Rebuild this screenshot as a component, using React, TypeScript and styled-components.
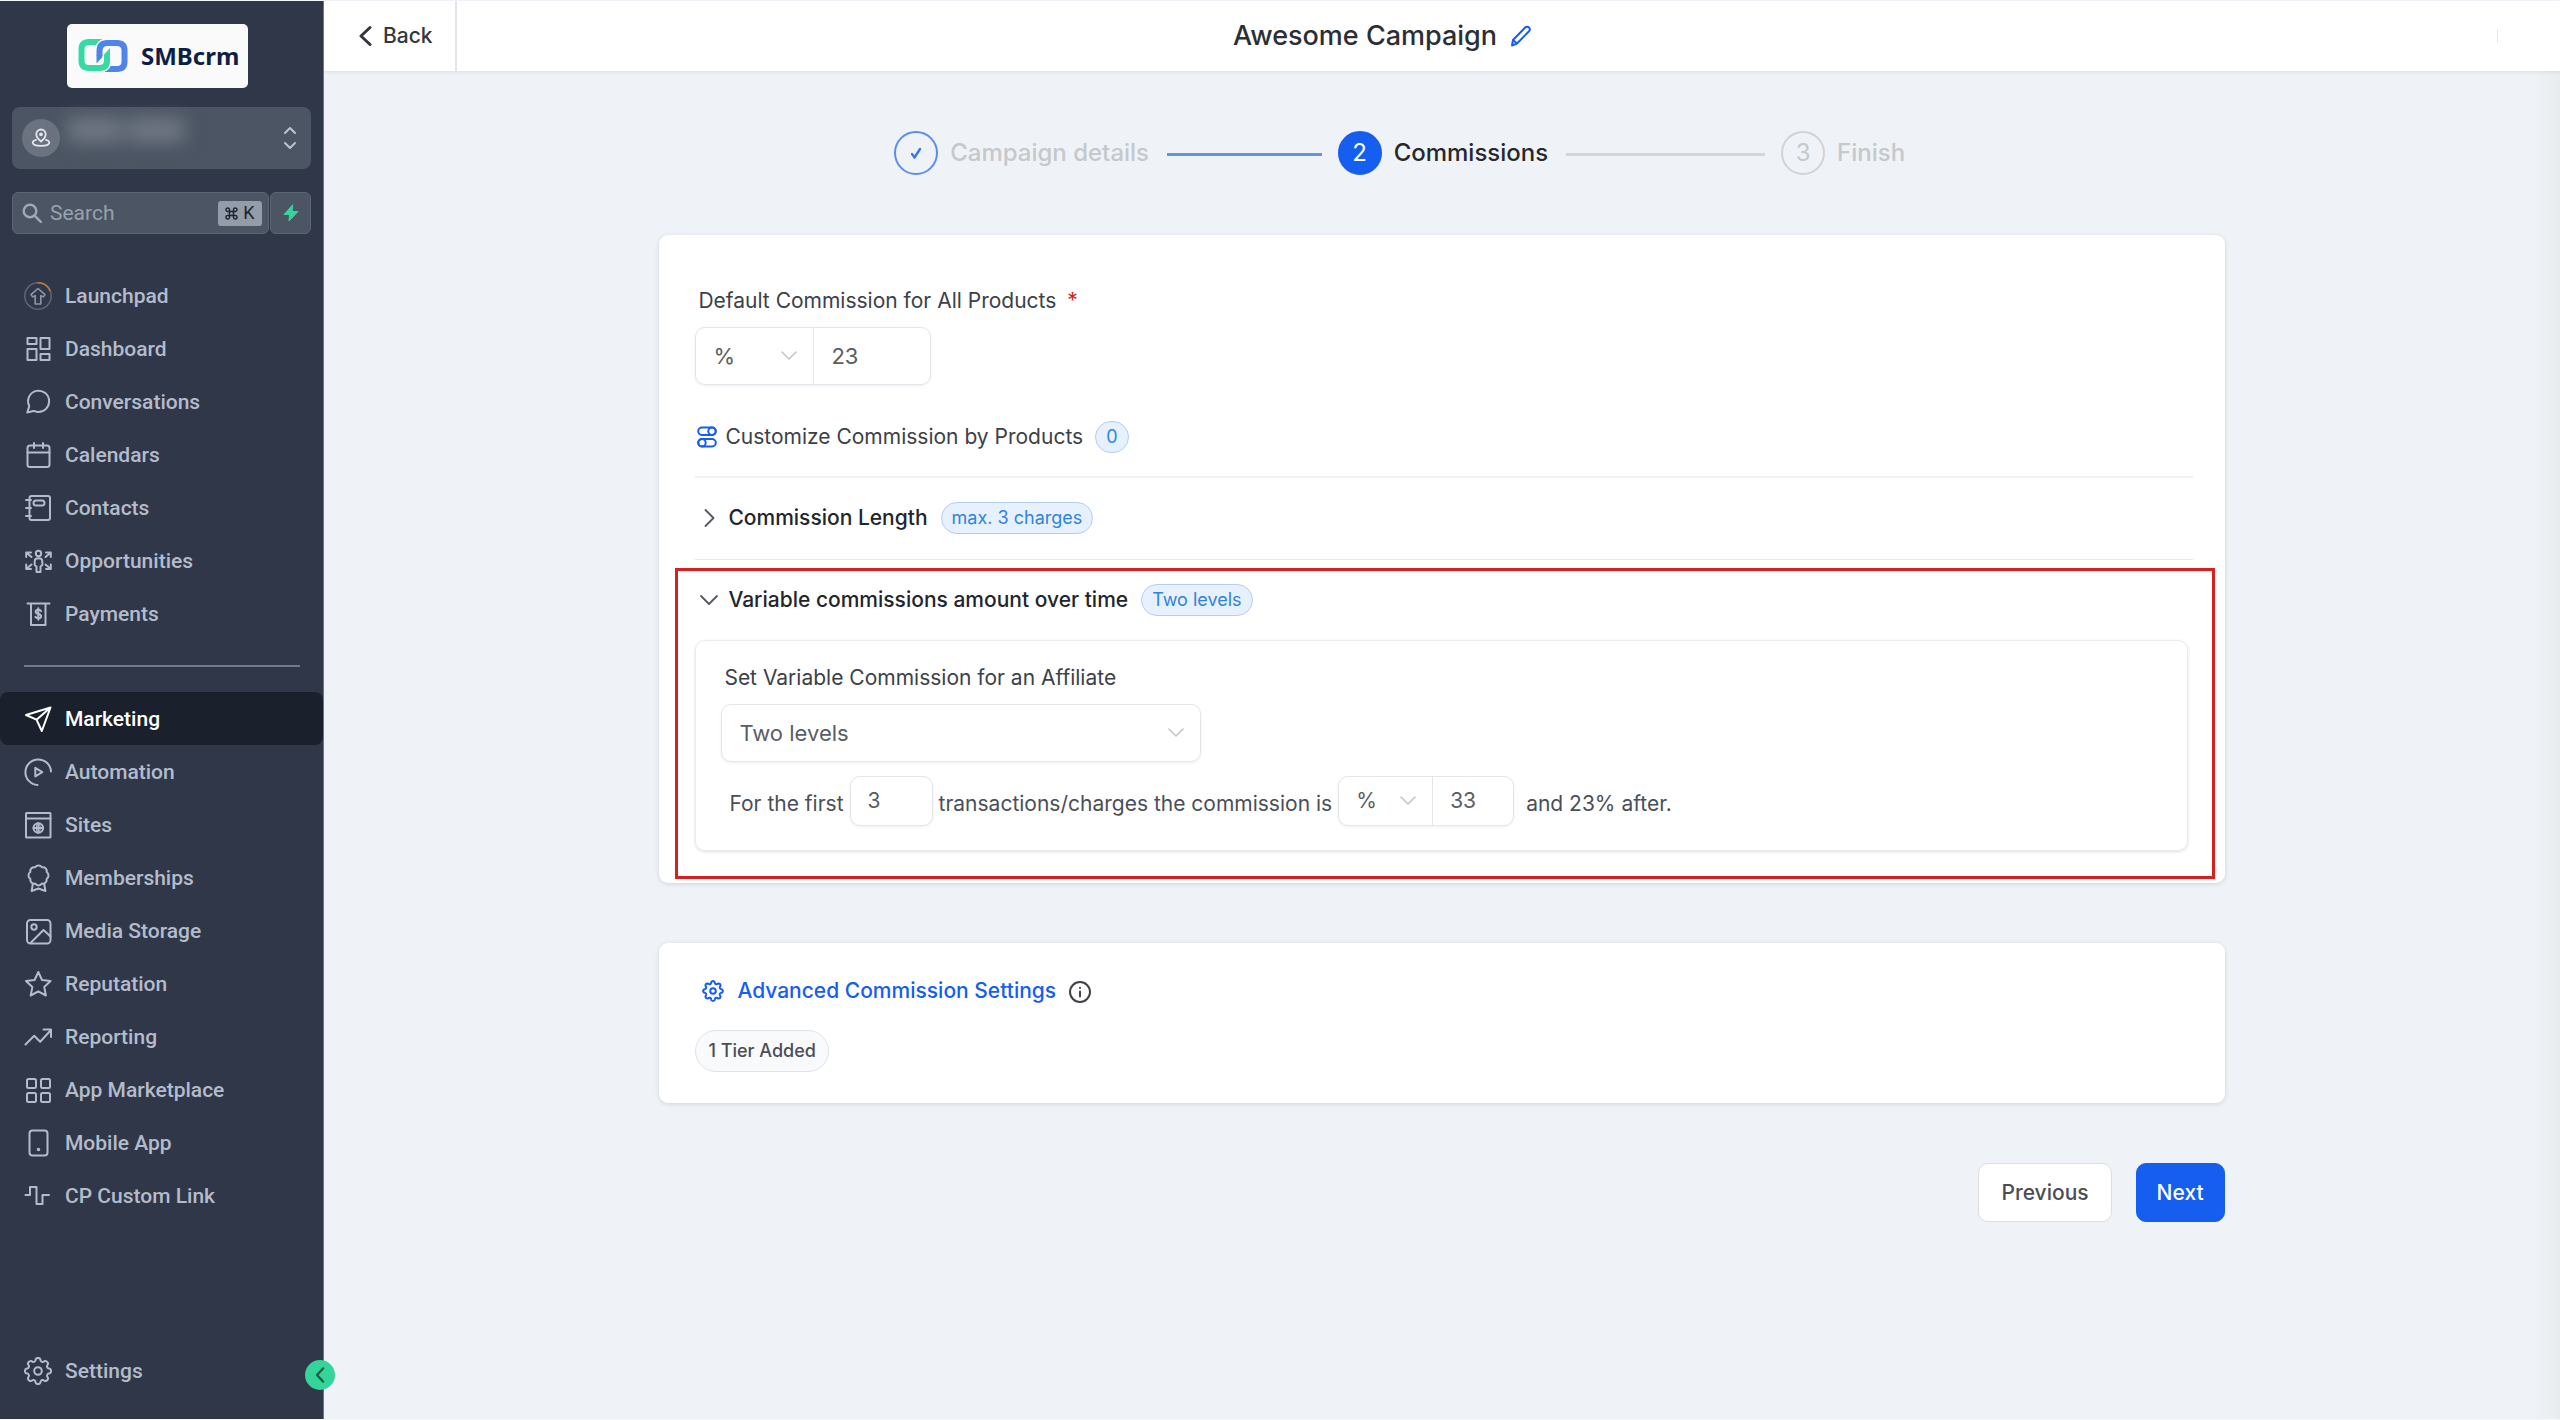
import React from 'react';
import styled, { createGlobalStyle, css } from 'styled-components';

const ui = '"Inter", "Liberation Sans", sans-serif';
const side = '"Roboto", "Liberation Sans", sans-serif';

const c = {
  sidebar: '#2f3749',
  sidebarText: '#b4bccb',
  panel: '#4b5563',
  active: '#1a202c',
  canvas: '#eff3f7',
  ink: '#22262c',
  body: '#3c4148',
  muted: '#5a5d63',
  line: '#e4e6e9',
  blue: '#155eef',
  softBlue: '#5b8def',
  green: '#35d49a',
  red: '#d92020',
};

const GlobalStyle = createGlobalStyle`
  *, *::before, *::after { box-sizing: border-box; }
  body { margin: 0; background: #f3f7fc; }
  button, input, select { font: inherit; color: inherit; margin: 0; }
  ul, ol { list-style: none; margin: 0; padding: 0; }
  svg { display: block; flex: none; }
`;

/* ---------- shell ---------- */

const Page = styled.div`
  display: flex;
  min-height: 100vh;
  padding: 1px 0;
  font-family: ${ui};
  color: ${c.body};
`;

const Sidebar = styled.aside`
  position: relative;
  flex: none;
  display: flex;
  flex-direction: column;
  width: 324px;
  padding: 23px 0 22px;
  background: ${c.sidebar};
  border-right: 1px solid #6d7686;
  font-family: ${side};
  color: ${c.sidebarText};
`;

const Logo = styled.a`
  display: flex;
  align-items: center;
  align-self: flex-start;
  gap: 13px;
  width: 181px;
  height: 64px;
  margin-left: 67px;
  padding-left: 11px;
  border-radius: 5px;
  background: #fafafa;
  color: #0d1f47;
  font-family: "Noto Sans", "Open Sans", sans-serif;
  font-size: 24px;
  font-weight: 700;
  line-height: 32px;
  text-decoration: none;
`;

const Account = styled.button`
  display: flex;
  align-items: center;
  gap: 4px;
  height: 62px;
  margin: 19px 12px 0;
  padding: 0 14px 0 10px;
  border: 0;
  border-radius: 8px;
  background: ${c.panel};
  color: #bcc3ce;
`;

const Avatar = styled.span`
  display: grid;
  place-items: center;
  width: 38px;
  height: 38px;
  border-radius: 50%;
  background: #6b7280;
  color: #e3e7ec;
`;

const HiddenName = styled.span`
  flex: 1;
  display: flex;
  align-self: flex-start;
  gap: 6px;
  padding: 11px 0 0 4px;
  filter: blur(9px);
  &::before, &::after {
    content: "";
    height: 24px;
    background: #717885;
  }
  &::before { width: 54px; }
  &::after { width: 56px; }
`;

const SearchRow = styled.div`
  display: flex;
  gap: 1px;
  margin: 23px 12px 0;
`;

const SearchBox = styled.label`
  flex: 1;
  min-width: 0;
  display: flex;
  align-items: center;
  gap: 8px;
  height: 42px;
  padding: 0 6px 0 9px;
  border: 1px solid #5b6574;
  border-radius: 6px;
  background: ${c.panel};
  color: #a0a8b5;
`;

const SearchInput = styled.input`
  flex: 1;
  width: 0;
  min-width: 0;
  padding: 0;
  border: 0;
  outline: 0;
  background: none;
  font-size: 21px;
  line-height: 28px;
  &::placeholder { color: #98a1ae; opacity: 1; }
`;

const Shortcut = styled.kbd`
  flex: none;
  display: flex;
  align-items: center;
  justify-content: center;
  gap: 5px;
  width: 44px;
  height: 25px;
  border-radius: 3px;
  background: #959ca9;
  color: #1f2530;
  font-family: ${side};
  font-size: 18px;
  line-height: 24px;
`;

const BoltButton = styled.button`
  flex: none;
  display: grid;
  place-items: center;
  width: 41px;
  height: 42px;
  padding: 0;
  border: 1px solid #5b6574;
  border-radius: 6px;
  background: ${c.panel};
`;

const NavList = styled.ul`
  margin-top: ${(p: { $top: number }) => p.$top}px;
`;

const NavLink = styled.a<{ $active?: boolean }>`
  display: flex;
  align-items: center;
  gap: 13px;
  height: 53px;
  padding-left: 24px;
  border-radius: 8px;
  color: inherit;
  font-size: 21px;
  font-weight: 500;
  line-height: 28px;
  text-decoration: none;
  ${p => p.$active && css`
    background: ${c.active};
    color: #fff;
  `}
`;

const NavDivider = styled.hr`
  width: 276px;
  height: 2px;
  margin: 25px 0 0 24px;
  border: 0;
  background: #6f7a8b;
`;

const SettingsSlot = styled.div`
  margin-top: auto;
`;

const Collapse = styled.button`
  position: absolute;
  right: -12px;
  bottom: 29px;
  display: grid;
  place-items: center;
  width: 30px;
  height: 30px;
  padding: 0;
  border: 0;
  border-radius: 50%;
  background: ${c.green};
  color: #17603f;
`;

const Main = styled.main`
  flex: 1;
  min-width: 0;
  background: linear-gradient(to left, #e7ebec 0, #e9eef0 6px, ${c.canvas} 28px);
`;

/* ---------- header ---------- */

const Header = styled.header`
  display: flex;
  height: 70px;
  background: #fff;
  box-shadow: 0 1px 3px rgba(30, 50, 80, 0.1);
`;

const BackButton = styled.button`
  display: flex;
  align-items: center;
  gap: 11px;
  width: 133px;
  padding: 0 0 0 34px;
  border: 0;
  border-right: 2px solid #e2e5e9;
  background: none;
  color: #34373c;
  font-size: 21px;
  font-weight: 500;
  line-height: 28px;
`;

const TitleArea = styled.div`
  flex: 1;
  display: flex;
  align-items: center;
  justify-content: center;
  gap: 13px;
`;

const HeaderTail = styled.div`
  display: flex;
  align-items: center;
  justify-content: flex-end;
  width: 252px;
  padding-right: 62px;
  &::after {
    content: "";
    width: 1px;
    height: 14px;
    background: #e6e6e8;
  }
`;

const Title = styled.h1`
  margin: 0;
  color: #2b2f35;
  font-size: 27px;
  font-weight: 500;
  line-height: 36px;
`;

const IconButton = styled.button`
  display: grid;
  place-items: center;
  padding: 0;
  border: 0;
  background: none;
  color: ${(p: { $color?: string }) => p.$color || c.blue};
`;

/* ---------- content ---------- */

const Content = styled.div`
  display: flex;
  flex-direction: column;
  gap: 60px;
  width: 70%;
  margin: 0 auto;
  padding: 60px 0;
`;

const Steps = styled.ol`
  display: grid;
  grid-template-columns: repeat(3, 1fr);
  padding-left: 15%;
`;

type StepState = 'done' | 'current' | 'todo';

const Step = styled.li<{ $state: StepState }>`
  display: flex;
  align-items: center;
  gap: 12px;
  height: 44px;
  color: ${p => (p.$state === 'current' ? '#25282d' : '#c5c8cc')};
  font-size: 24px;
  font-weight: 500;
  line-height: 32px;
`;

const StepMark = styled.span<{ $state: StepState }>`
  display: grid;
  place-items: center;
  flex: none;
  width: 44px;
  height: 44px;
  border: 2px solid ${p => (p.$state === 'todo' ? '#d0d2d5' : p.$state === 'done' ? c.softBlue : c.blue)};
  border-radius: 50%;
  background: ${p => (p.$state === 'current' ? c.blue : 'transparent')};
  color: ${p => (p.$state === 'current' ? '#fff' : p.$state === 'done' ? '#3b78e7' : '#c5c8cc')};
  font-weight: 400;
`;

const StepLine = styled.span<{ $done?: boolean }>`
  flex: 1;
  height: 3px;
  margin: 2px 16px 0 6px;
  background: ${p => (p.$done ? '#6493df' : '#d3d5d9')};
`;

const Card = styled.section`
  border-radius: 9px;
  background: #fff;
  box-shadow: 0 1px 4px rgba(30, 50, 80, 0.16);
`;

const Block = styled.div<{ $top?: number }>`
  display: flex;
  flex-direction: column;
  align-items: flex-start;
  padding: ${p => p.$top || 0}px 36px 0;
`;

const FieldLabel = styled.label`
  padding-left: 3px;
  margin-bottom: 12px;
  color: ${c.body};
  font-size: 21px;
  line-height: 28px;
`;

const Star = styled.span`
  margin-left: 11px;
  color: ${c.red};
`;

const Group = styled.div<{ $small?: boolean }>`
  display: flex;
  height: ${p => (p.$small ? 50 : 58)}px;
  border: 1px solid ${c.line};
  border-radius: 10px;
  background: #fff;
  box-shadow: 0 1px 3px rgba(30, 50, 80, 0.08);
  color: ${c.muted};
  font-size: ${p => (p.$small ? 21 : 22)}px;
`;

const SelectWrap = styled.div<{ $w: number; $pad: number }>`
  display: grid;
  align-items: center;
  width: ${p => p.$w}px;
  color: #c3c6ca;
  > * { grid-area: 1 / 1; }
  > svg { justify-self: end; margin-right: ${p => p.$pad}px; pointer-events: none; }
`;

const Select = styled.select`
  appearance: none;
  width: 100%;
  height: 100%;
  padding: 0 17px;
  border: 0;
  outline: 0;
  background: none;
  color: ${c.muted};
`;

const Amount = styled.input<{ $w: number; $divided?: boolean }>`
  width: ${p => p.$w}px;
  padding: 0 17px;
  border: 0;
  border-left: ${p => (p.$divided ? `1px solid ${c.line}` : '0')};
  outline: 0;
  background: none;
`;

const Customize = styled.button`
  display: flex;
  align-items: center;
  gap: 8px;
  margin-top: 36px;
  height: 32px;
  padding: 0 0 0 2px;
  border: 0;
  background: none;
  color: ${c.body};
  font-size: 21px;
  line-height: 28px;
  > svg { color: ${c.blue}; }
`;

const Badge = styled.span`
  display: inline-flex;
  align-items: center;
  justify-content: center;
  height: 32px;
  min-width: 32px;
  margin-left: 4px;
  padding: 0 10px;
  border: 1px solid #b3cfee;
  border-radius: 16px;
  background: #e7f1fd;
  color: #2f83dc;
  font-size: 18px;
  font-weight: 400;
  line-height: 24px;
`;

const Divider = styled.hr<{ $strong?: boolean }>`
  height: ${p => (p.$strong ? 2 : 1)}px;
  margin: ${p => (p.$strong ? 23 : 25)}px 32px 0 36px;
  border: 0;
  background: ${p => (p.$strong ? '#f0f2f5' : '#e9eaed')};
`;

const Disclosure = styled.button`
  display: flex;
  align-items: center;
  gap: 9px;
  height: 32px;
  padding: 0 0 0 4px;
  border: 0;
  background: none;
  color: ${c.ink};
  font-size: 21px;
  font-weight: 500;
  line-height: 28px;
  > svg { color: #55585e; }
`;

const Highlight = styled.div`
  margin: 8px 10px 4px 16px;
  padding: 13px 24px 25px 17px;
  border: 3px solid ${c.red};
`;

const Inset = styled.div`
  display: flex;
  flex-direction: column;
  align-items: flex-start;
  margin-top: 24px;
  padding: 23px 25px 24px;
  border: 1px solid #e9ebee;
  border-radius: 10px;
  box-shadow: 0 1px 3px rgba(30, 50, 80, 0.16);
`;

const Sentence = styled.div`
  display: flex;
  align-items: center;
  gap: 6px;
  margin-top: 14px;
  padding-left: 8px;
  color: #4a4f57;
  font-size: 21px;
  line-height: 28px;
`;

const Phrase = styled.span<{ $lead?: boolean }>`
  padding-top: 6px;
  padding-left: ${p => (p.$lead ? 6 : 0)}px;
`;

const AdvancedRow = styled.div`
  display: flex;
  align-items: center;
  gap: 12px;
  padding-left: 7px;
  height: 28px;
`;

const AdvancedLink = styled.a`
  display: flex;
  align-items: center;
  gap: 13px;
  color: ${c.blue};
  font-size: 21px;
  font-weight: 500;
  line-height: 28px;
  text-decoration: none;
`;

const Pill = styled.span`
  height: 42px;
  margin: 25px 0 31px;
  padding: 0 12px;
  border: 1px solid #e1e3e7;
  border-radius: 21px;
  background: #f9fafb;
  color: #4b4e54;
  font-size: 18px;
  font-weight: 500;
  line-height: 40px;
`;

const Actions = styled.div`
  display: flex;
  justify-content: flex-end;
  gap: 24px;
`;

const Action = styled.button<{ $primary?: boolean }>`
  height: 59px;
  padding: 0 ${p => (p.$primary ? 20 : 22)}px;
  border: 1px solid ${p => (p.$primary ? c.blue : '#dcdee2')};
  border-radius: 10px;
  background: ${p => (p.$primary ? c.blue : '#fff')};
  color: ${p => (p.$primary ? '#fff' : '#4b4e54')};
  font-size: 21px;
  font-weight: 500;
  line-height: 28px;
`;

/* ---------- icons ---------- */

type IconProps = { children: React.ReactNode; w?: number; h?: number; stroke?: number; box?: string };

const Icon = ({ children, w = 28, h = w, stroke = 2, box }: IconProps) => (
  <svg
    width={w}
    height={h}
    viewBox={box || `0 0 ${w} ${h}`}
    fill="none"
    stroke="currentColor"
    strokeWidth={stroke}
    strokeLinecap="round"
    strokeLinejoin="round"
    aria-hidden="true"
  >
    {children}
  </svg>
);

const gear = (mid: number, outer: number, inner: number) => {
  const n = 8;
  let d = '';
  for (let i = 0; i < n; i++) {
    const a = (i * 2 * Math.PI) / n - Math.PI / 2;
    const at = (r: number, o: number) =>
      `${(mid + r * Math.cos(a + o)).toFixed(2)} ${(mid + r * Math.sin(a + o)).toFixed(2)}`;
    d += `${i ? 'L' : 'M'}${at(inner, -0.27)}L${at(outer - 0.6, -0.17)}Q${at(outer + 0.9, 0)} ${at(outer - 0.6, 0.17)}L${at(inner, 0.27)}Q${at(inner - 0.9, 0.39)} ${at(inner, 0.515)}`;
  }
  return d + 'Z';
};

const icons: Record<string, React.ReactNode> = {
  Launchpad: (
    <Icon w={28} stroke={1.6}>
      <circle cx="14" cy="14" r="13.2" stroke="#5a6374" />
      <path d="M14 .8A13.2 13.2 0 0 1 26 8.6" stroke="#c5763a" />
      <path d="M14 6.5 21 12.6l-1.6 2.3-2.6-1.3V22h-5.6v-8.4l-2.6 1.3L7 12.6Z" stroke="#8e97a8" />
    </Icon>
  ),
  Dashboard: (
    <Icon>
      <rect x="3.5" y="3" width="9" height="6" />
      <rect x="3.5" y="14" width="9" height="11" />
      <rect x="16.5" y="3" width="9" height="11" />
      <rect x="16.5" y="19" width="9" height="6" />
    </Icon>
  ),
  Conversations: (
    <Icon box="0 0 24 24" stroke={1.7}>
      <path d="M21.5 11.5a9 9 0 0 1-9 9c-1.3 0-2.5-.26-3.6-.75-.3-.1-.5-.15-.8-.1L2.8 21l1.6-5c.1-.3.1-.5 0-.8A9 9 0 1 1 21.5 11.5Z" />
    </Icon>
  ),
  Calendars: (
    <Icon>
      <rect x="3.5" y="4.5" width="22" height="21.5" rx="2.5" />
      <path d="M3.5 11.5h22M10 2v5M19 2v5" />
    </Icon>
  ),
  Contacts: (
    <Icon>
      <rect x="5.5" y="2" width="20.5" height="24" rx="2" />
      <rect x="9.5" y="6.5" width="11" height="5" rx="2.5" />
      <path d="M2 6h5M2 14h5M2 22h5" />
    </Icon>
  ),
  Opportunities: (
    <Icon>
      <circle cx="14.5" cy="6.5" r="2.7" />
      <path d="M12.5 25h4v-5.5l1.8-1.5v-3.5c0-2-1.5-3.2-3.8-3.2s-3.8 1.2-3.8 3.2V18l1.8 1.5Z" />
      <path d="M2.2 10V5.5H7M2.5 5.8 7.5 10M26.8 10V5.5H22M26.5 5.8 21.5 10M2.2 17.5V22H7M2.5 21.7 7.5 17.5M26.8 17.5V22H22M26.5 21.7 21.5 17.5" />
    </Icon>
  ),
  Payments: (
    <Icon>
      <path d="M3.5 3.5h22M7 3.5V25h14.5V3.5" />
      <path d="M17 11.2c-.4-1-1.4-1.4-2.7-1.4-1.5 0-2.6.7-2.6 2s1 1.8 2.6 2.2c1.7.4 2.8.9 2.8 2.2s-1.2 2.1-2.8 2.1c-1.4 0-2.4-.5-2.9-1.5M14.3 8.3v11.5" />
    </Icon>
  ),
  Marketing: (
    <Icon>
      <path d="M26.5 2.5 17.8 26l-5.3-11.3L2 10Z M26.5 2.5 12.5 14.7" />
    </Icon>
  ),
  Automation: (
    <Icon>
      <path d="M27 13.5A12.8 12.8 0 1 0 13.5 27" />
      <path d="M11.3 9.8v8.6l7-4.3Z" />
    </Icon>
  ),
  Sites: (
    <Icon>
      <rect x="2" y="2" width="24.5" height="24.5" rx="0.5" />
      <path d="M2 7.5h24.5" />
      <circle cx="14.3" cy="17" r="4.8" />
      <path d="M14.3 12.2v9.6M9.5 17h9.6" />
      <ellipse cx="14.3" cy="17" rx="2" ry="4.8" strokeWidth="1" />
    </Icon>
  ),
  Memberships: (
    <Icon>
      <path
        transform="translate(2.5 -0.6) scale(1)"
        d="M3.85 8.62a4 4 0 0 1 4.78-4.77 4 4 0 0 1 6.74 0 4 4 0 0 1 4.78 4.78 4 4 0 0 1 0 6.74 4 4 0 0 1-4.77 4.78 4 4 0 0 1-6.75 0 4 4 0 0 1-4.78-4.77 4 4 0 0 1 0-6.76Z"
      />
      <path d="M8.8 20 7.6 27l6.9-2.5 6.9 2.5-1.2-7" />
    </Icon>
  ),
  'Media Storage': (
    <Icon>
      <rect x="3" y="3" width="23.5" height="23.5" rx="3.5" />
      <circle cx="10" cy="10" r="2.7" />
      <path d="M6.5 26 19.5 13l7 6.5" />
    </Icon>
  ),
  Reputation: (
    <Icon>
      <path d="m14.3 2 3.7 8 8.6 1-6.4 5.9 1.7 8.6-7.6-4.2-7.6 4.2 1.7-8.6L2 11l8.6-1Z" />
    </Icon>
  ),
  Reporting: (
    <Icon>
      <path d="m1.5 21.5 8.7-8.8 6 6L27 7M19.5 6.5H27V14" />
    </Icon>
  ),
  'App Marketplace': (
    <Icon>
      <rect x="3" y="3" width="9" height="9" rx="1.5" />
      <rect x="17" y="3" width="9" height="9" rx="1.5" />
      <rect x="3" y="17" width="9" height="9" rx="1.5" />
      <rect x="17" y="17" width="9" height="9" rx="1.5" />
    </Icon>
  ),
  'Mobile App': (
    <Icon>
      <rect x="5.5" y="1.5" width="18" height="25" rx="3" />
      <circle cx="14.5" cy="20.5" r="0.8" />
    </Icon>
  ),
  'CP Custom Link': (
    <Icon>
      <path d="M1.5 13H6V5h6.500v17h6v-9h6.500" />
    </Icon>
  ),
  Settings: (
    <Icon>
      <path d={gear(14, 13, 10.4)} />
      <circle cx="14" cy="14" r="3.8" />
    </Icon>
  ),
};

const Chevron = () => (
  <Icon w={16} h={10} stroke={1.6}>
    <path d="m1 1 7 7 7-7" />
  </Icon>
);

const LogoMark = () => (
  <svg width="50" height="34" viewBox="0 0 50 34" fill="none" strokeWidth="6" aria-hidden="true">
    <path d="M24 3H11Q3.5 3 3.5 10.5V21.5Q3.5 29 11 29H18" stroke="#36dba1" />
    <path d="M21.5 17V12Q21.5 4 29.5 4H39Q46.5 4 46.5 11.5V22.5Q46.5 30 39 30H27" stroke="#fafafa" strokeWidth="9" />
    <path d="M21.5 17V12Q21.5 4 29.5 4H39Q46.5 4 46.5 11.5V22.5Q46.5 30 39 30H27" stroke="#4f84ea" />
    <path d="M18.5 16.5V24.5L24.5 18V16.5Z" fill="#4f84ea" />
    <path d="M17 29H21.5Q29 29 29 21.5V17" stroke="#fafafa" strokeWidth="9" />
    <path d="M11 29H21.5Q29 29 29 21.5V17" stroke="#36dba1" />
    <path d="M26 17.5V15.5L32 9V17.5Z" fill="#36dba1" />
  </svg>
);

/* ---------- page ---------- */

const primaryNav = ['Launchpad', 'Dashboard', 'Conversations', 'Calendars', 'Contacts', 'Opportunities', 'Payments'];
const secondaryNav = [
  'Marketing', 'Automation', 'Sites', 'Memberships', 'Media Storage',
  'Reputation', 'Reporting', 'App Marketplace', 'Mobile App', 'CP Custom Link',
];

const NavItems = ({ items, top }: { items: string[]; top: number }) => (
  <NavList $top={top}>
    {items.map(name => (
      <li key={name}>
        <NavLink href="#" $active={name === 'Marketing'} aria-current={name === 'Marketing' ? 'page' : undefined}>
          {icons[name]}
          {name}
        </NavLink>
      </li>
    ))}
  </NavList>
);

export default function App() {
  return (
    <Page>
      <GlobalStyle />
      <Sidebar>
        <Logo href="#">
          <LogoMark />
          SMBcrm
        </Logo>
        <Account aria-label="Switch account">
          <Avatar>
            <Icon w={20} stroke={1.8}>
              <path d="M10 13.5C7 11 5.3 9 5.3 6.2a4.7 4.7 0 0 1 9.4 0C14.7 9 13 11 10 13.5Z" />
              <circle cx="10" cy="6.3" r="1" />
              <path d="M5 11.8c-2 .6-3.3 1.5-3.3 2.7 0 2 3.7 3.3 8.3 3.3s8.3-1.3 8.3-3.3c0-1.2-1.3-2.1-3.3-2.7" />
            </Icon>
          </Avatar>
          <HiddenName />
          <Icon w={14} h={24} stroke={2}>
            <path d="m2 7 5-5 5 5M2 17l5 5 5-5" />
          </Icon>
        </Account>
        <SearchRow>
          <SearchBox>
            <Icon w={20} stroke={2.4}>
              <circle cx="8" cy="8" r="6.3" />
              <path d="m12.8 12.8 6 6" />
            </Icon>
            <SearchInput type="text" placeholder="Search" aria-label="Search" />
            <Shortcut>
              <Icon w={13} stroke={1.5}>
                <path d="M4.5 4.5h4v4h-4ZM4.5 4.5h-2a1.8 1.8 0 1 1 2-2ZM8.5 4.5v-2a1.8 1.8 0 1 1 2 2ZM8.5 8.5h2a1.8 1.8 0 1 1-2 2ZM4.5 8.5v2a1.8 1.8 0 1 1-2-2Z" />
              </Icon>
              K
            </Shortcut>
          </SearchBox>
          <BoltButton aria-label="Quick actions">
            <Icon w={18}>
              <path d="M10.5 1 2 10.5h5.5L7 17l9-9.5h-5.5Z" fill={c.green} stroke={c.green} strokeWidth="1" />
            </Icon>
          </BoltButton>
        </SearchRow>
        <nav aria-label="Main">
          <NavItems items={primaryNav} top={35} />
          <NavDivider />
          <NavItems items={secondaryNav} top={25} />
        </nav>
        <SettingsSlot>
          <NavLink href="#">
            {icons.Settings}
            Settings
          </NavLink>
        </SettingsSlot>
        <Collapse aria-label="Collapse sidebar">
          <Icon w={10} h={16} stroke={2.4}>
            <path d="M8 1.5 2 8l6 6.5" />
          </Icon>
        </Collapse>
      </Sidebar>

      <Main>
        <Header>
          <BackButton>
            <Icon w={14} h={22} stroke={3}>
              <path d="m12 2.5-9 8.5 9 8.5" />
            </Icon>
            Back
          </BackButton>
          <TitleArea>
            <Title>Awesome Campaign</Title>
            <IconButton aria-label="Edit campaign name">
              <Icon w={22} stroke={2}>
                <path d="M2 20.5 3 15 15.2 2.5a2.6 2.6 0 0 1 3.8 0 2.6 2.6 0 0 1 0 3.8L7 18.5ZM3 15l4 3.5" />
              </Icon>
            </IconButton>
          </TitleArea>
          <HeaderTail />
        </Header>

        <Content>
          <Steps>
            <Step $state="done">
              <StepMark $state="done">
                <Icon w={14} stroke={2.4}>
                  <path d="m3 8 2.500 3.500L11 3" />
                </Icon>
              </StepMark>
              Campaign details
              <StepLine $done />
            </Step>
            <Step $state="current" aria-current="step">
              <StepMark $state="current">2</StepMark>
              Commissions
              <StepLine />
            </Step>
            <Step $state="todo">
              <StepMark $state="todo">3</StepMark>
              Finish
            </Step>
          </Steps>

          <Card>
            <Block $top={52}>
              <FieldLabel htmlFor="default-amount">
                Default Commission for All Products<Star>*</Star>
              </FieldLabel>
              <Group>
                <SelectWrap $w={117} $pad={16}>
                  <Select aria-label="Default commission unit" defaultValue="%">
                    <option>%</option>
                    <option>$</option>
                  </Select>
                  <Chevron />
                </SelectWrap>
                <Amount id="default-amount" $w={117} $divided defaultValue="23" />
              </Group>
              <Customize>
                <Icon w={20} h={22} stroke={2}>
                  <rect x="1.2" y="1.5" width="17.6" height="7.5" rx="3.7" />
                  <circle cx="15" cy="5.2" r="3.7" />
                  <rect x="1.2" y="13" width="17.6" height="7.5" rx="3.7" />
                  <circle cx="5" cy="16.8" r="3.7" />
                </Icon>
                Customize Commission by Products
                <Badge>0</Badge>
              </Customize>
            </Block>
            <Divider $strong />
            <Block $top={24}>
              <Disclosure aria-expanded="false">
                <Icon w={20} stroke={1.8}>
                  <path d="m6.5 2 8 8-8 8" />
                </Icon>
                Commission Length
                <Badge>max. 3 charges</Badge>
              </Disclosure>
            </Block>
            <Divider />
            <Highlight>
              <Disclosure aria-expanded="true">
                <Icon w={20} stroke={1.8}>
                  <path d="m2 6 8 8 8-8" />
                </Icon>
                Variable commissions amount over time
                <Badge>Two levels</Badge>
              </Disclosure>
              <Inset>
                <FieldLabel htmlFor="levels">Set Variable Commission for an Affiliate</FieldLabel>
                <Group>
                  <SelectWrap $w={478} $pad={16}>
                    <Select id="levels" defaultValue="Two levels">
                      <option>Two levels</option>
                      <option>Three levels</option>
                    </Select>
                    <Chevron />
                  </SelectWrap>
                </Group>
                <Sentence>
                  <Phrase>For the first</Phrase>
                  <Group $small>
                    <Amount $w={81} defaultValue="3" aria-label="Number of charges" />
                  </Group>
                  <Phrase>transactions/charges the commission is</Phrase>
                  <Group $small>
                    <SelectWrap $w={93} $pad={16}>
                      <Select aria-label="First level unit" defaultValue="%">
                        <option>%</option>
                        <option>$</option>
                      </Select>
                      <Chevron />
                    </SelectWrap>
                    <Amount $w={81} $divided defaultValue="33" aria-label="First level commission" />
                  </Group>
                  <Phrase $lead>and 23% after.</Phrase>
                </Sentence>
              </Inset>
            </Highlight>
          </Card>

          <Card>
            <Block $top={34}>
              <AdvancedRow>
                <AdvancedLink href="#">
                  <Icon w={22} stroke={2}>
                    <path d={gear(11, 9.8, 7.8)} />
                    <circle cx="11" cy="11" r="2.8" />
                  </Icon>
                  Advanced Commission Settings
                </AdvancedLink>
                <IconButton $color="#3f4247" aria-label="About advanced settings">
                  <Icon w={24} stroke={2}>
                    <circle cx="12" cy="13" r="10" />
                    <path d="M12 12.5v5M12 8.8v.2" />
                  </Icon>
                </IconButton>
              </AdvancedRow>
              <Pill>1 Tier Added</Pill>
            </Block>
          </Card>

          <Actions>
            <Action>Previous</Action>
            <Action $primary>Next</Action>
          </Actions>
        </Content>
      </Main>
    </Page>
  );
}
